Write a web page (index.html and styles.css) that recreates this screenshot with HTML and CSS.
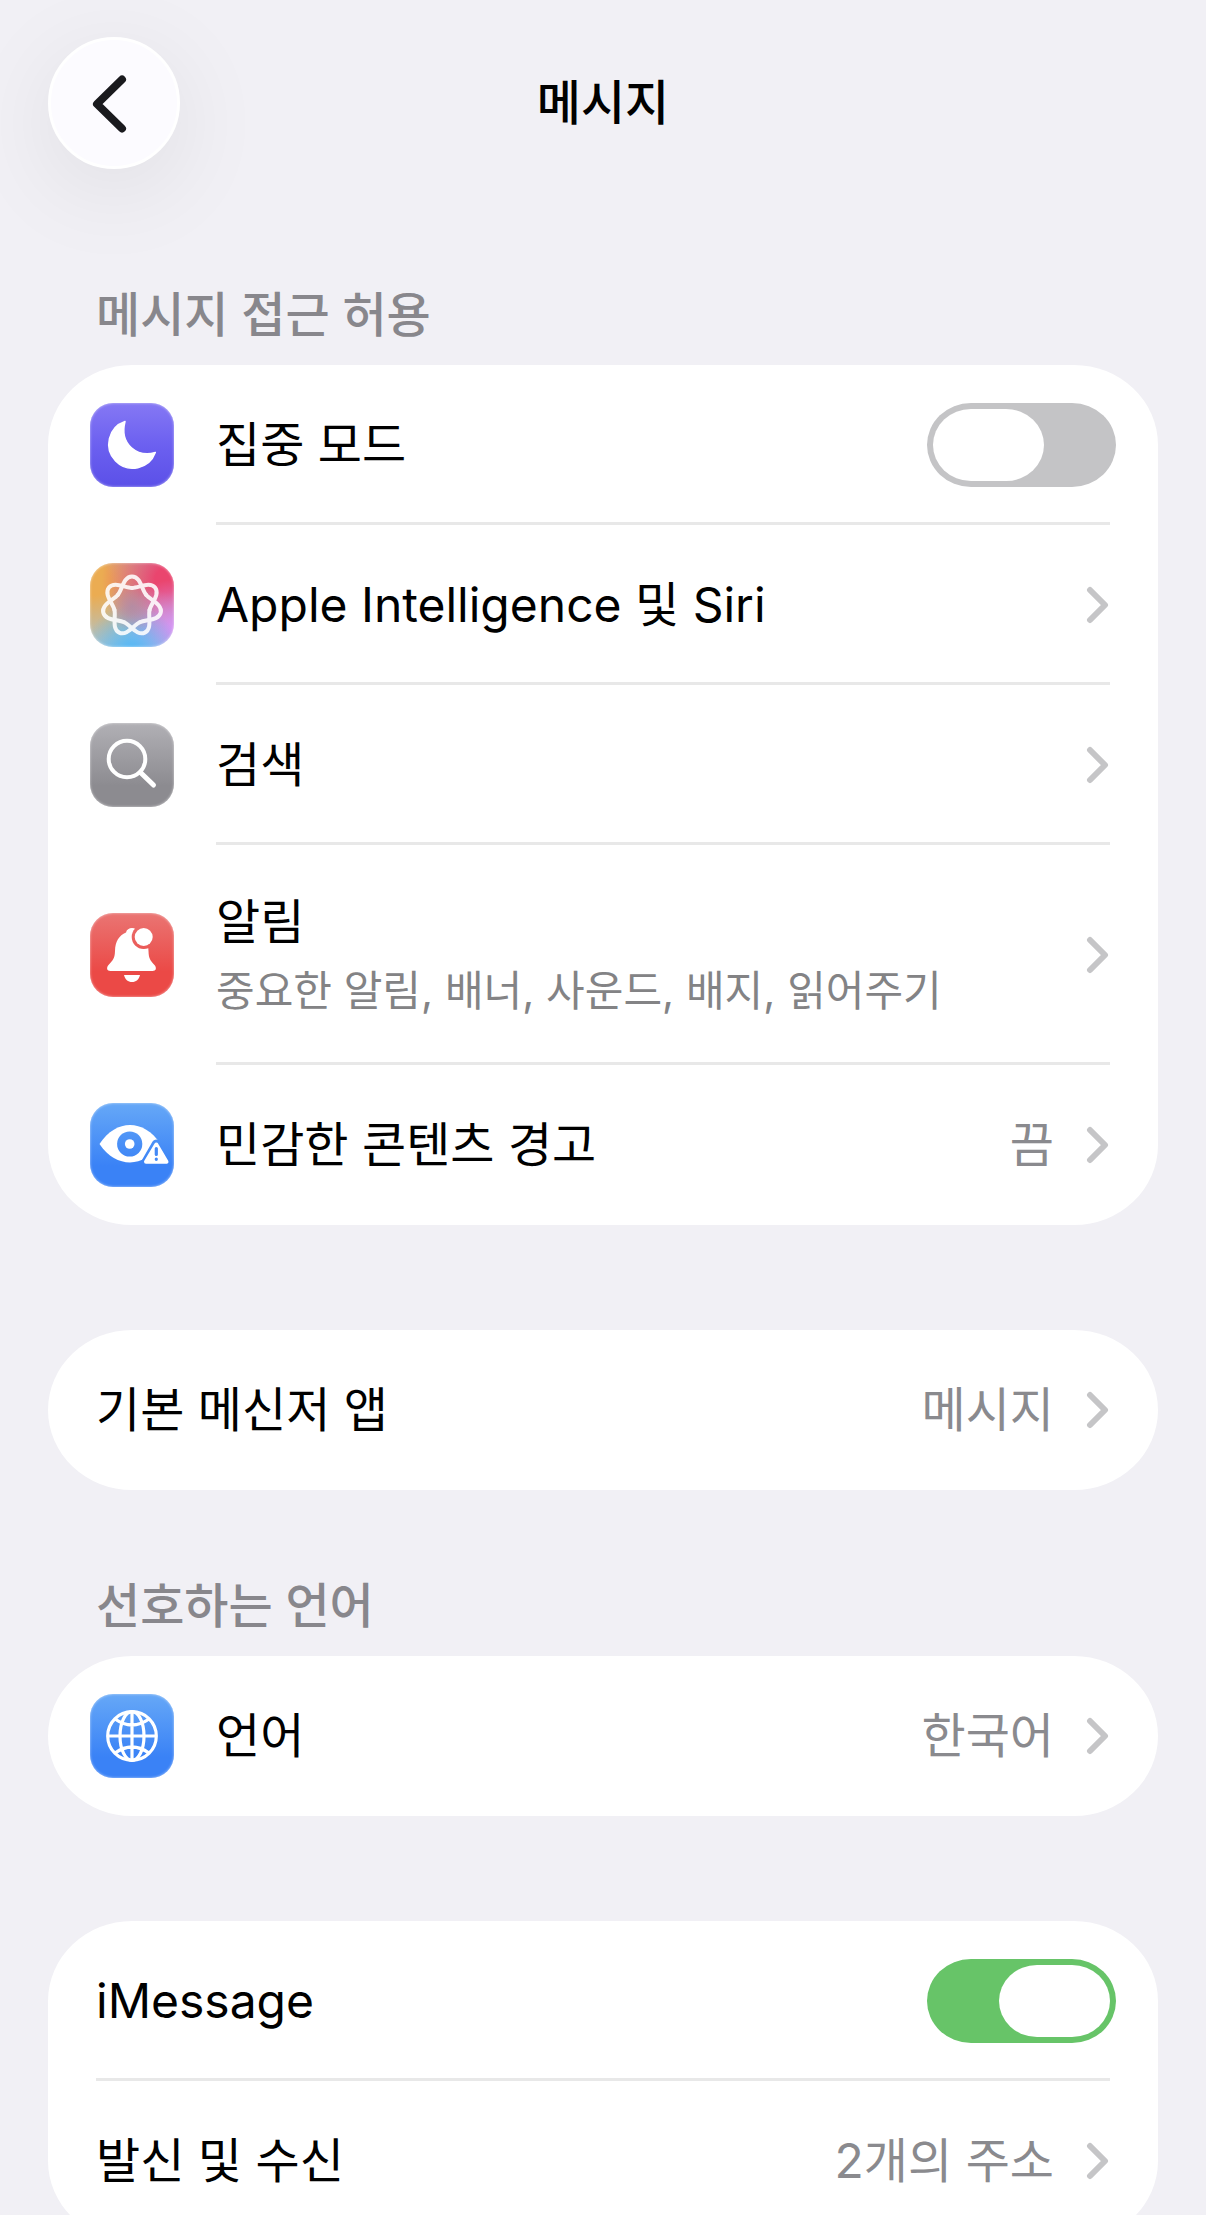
FILE: index.html
```html
<!DOCTYPE html>
<html lang="ko">
<head>
    <meta charset="UTF-8">
    <meta name="viewport" content="width=device-width, initial-scale=1.0">
    <title>메시지</title>
    <link rel="stylesheet" href="styles.css">
</head>
<body>
    <!-- 공용 심볼 -->
    <svg class="symbols" aria-hidden="true">
        <symbol id="chevron" viewBox="0 0 24 40">
            <path d="M4 5l15 15L4 35" fill="none" stroke="currentColor" stroke-width="6" stroke-linecap="round" stroke-linejoin="round"/>
        </symbol>
    </svg>

    <div id="app">
        <header class="header">
            <button class="back" type="button" aria-label="뒤로">
                <svg viewBox="0 0 132 132">
                    <path d="M74 42.500L49 67L74 91.500" fill="none" stroke="#1a1a1e" stroke-width="8" stroke-linecap="round" stroke-linejoin="round"/>
                </svg>
            </button>
            <h1 class="title">메시지</h1>
        </header>

        <main class="main">
            <section class="section first">
                <h2 class="section-title">메시지 접근 허용</h2>
                <div class="card">
                    <div class="row">
                        <span class="icon icon-focus">
                            <svg viewBox="0 0 84 84">
                                <path d="M35 18.500A24 24 0 1 0 65.300 49.500C48 54.500 29 42 35 18.500Z" fill="#fff" stroke="#fff" stroke-width="1.500" stroke-linejoin="round"/>
                            </svg>
                        </span>
                        <div class="row-body">
                            <label class="label" for="focus">집중 모드</label>
                            <input class="switch" type="checkbox" id="focus">
                        </div>
                    </div>
                    <a class="row" href="#siri">
                        <span class="icon icon-siri">
                            <svg viewBox="0 0 84 84">
                                <defs>
                                    <path id="lobe" d="M-14.070 -11.220C-9.700 -16.700 -8.500 -29.500 0 -29.500S9.700 -16.700 14.070 -11.220"/>
                                </defs>
                                <g transform="translate(42 43)" fill="none" stroke="#fff" stroke-width="4" stroke-linecap="round" opacity="0.880">
                                    <use href="#lobe"/>
                                    <use href="#lobe" transform="rotate(51.430)"/>
                                    <use href="#lobe" transform="rotate(102.860)"/>
                                    <use href="#lobe" transform="rotate(154.290)"/>
                                    <use href="#lobe" transform="rotate(205.710)"/>
                                    <use href="#lobe" transform="rotate(257.140)"/>
                                    <use href="#lobe" transform="rotate(308.570)"/>
                                </g>
                            </svg>
                        </span>
                        <div class="row-body">
                            <span class="label">Apple Intelligence 및 Siri</span>
                            <svg class="chevron"><use href="#chevron"/></svg>
                        </div>
                    </a>
                    <a class="row" href="#search">
                        <span class="icon icon-search">
                            <svg viewBox="0 0 84 84" fill="none" stroke="#fff" stroke-linecap="round">
                                <circle cx="37" cy="36" r="18.300" stroke-width="4"/>
                                <path d="M50.500 49.500L63.500 62" stroke-width="5"/>
                            </svg>
                        </span>
                        <div class="row-body">
                            <span class="label">검색</span>
                            <svg class="chevron"><use href="#chevron"/></svg>
                        </div>
                    </a>
                    <a class="row row-tall" href="#notifications">
                        <span class="icon icon-bell">
                            <svg viewBox="0 0 84 84">
                                <mask id="bell-cut">
                                    <rect width="84" height="84" fill="#fff"/>
                                    <circle cx="53.700" cy="24" r="12" fill="#000"/>
                                </mask>
                                <g fill="#fff">
                                    <path mask="url(#bell-cut)" d="M36 19.500C37 13.500 47 13.500 48 19.500C55 22 58.300 29 58.500 38C58.700 46 60.500 47.500 64.500 52C67 55 66 58 62.500 58H20.500C17 58 16 55 18.500 52C22.500 47.500 24.800 46 25 38C25.200 28.500 29 22.500 36 19.500Z"/>
                                    <circle cx="53.700" cy="24" r="9"/>
                                    <path d="M34 62H50C49 66.500 46 69 42 69S35 66.500 34 62Z"/>
                                </g>
                            </svg>
                        </span>
                        <div class="row-body">
                            <span class="label">알림
                                <small class="detail">중요한 알림, 배너, 사운드, 배지, 읽어주기</small>
                            </span>
                            <svg class="chevron"><use href="#chevron"/></svg>
                        </div>
                    </a>
                    <a class="row" href="#sensitive">
                        <span class="icon icon-blue">
                            <svg viewBox="0 0 84 84">
                                <mask id="eye-cut">
                                    <rect width="84" height="84" fill="#fff"/>
                                    <circle cx="39.700" cy="41" r="12.600" fill="#000"/>
                                    <path d="M66.300 41L76.500 59H56Z" fill="#000" stroke="#000" stroke-width="9" stroke-linejoin="round"/>
                                </mask>
                                <path mask="url(#eye-cut)" d="M9.500 41C18 28 29 22 40 22S62 28 70.500 41C62 53 51 59.400 40 59.400S18 54 9.500 41Z" fill="#fff"/>
                                <circle cx="39.700" cy="41" r="4.800" fill="#fff"/>
                                <path d="M66.300 41.500L76.500 58.700H56Z" fill="#fff" stroke="#fff" stroke-width="4" stroke-linejoin="round"/>
                                <path d="M66.300 45.500V51.500M66.300 56V56.300" stroke="#4389f6" stroke-width="3.200" stroke-linecap="round"/>
                            </svg>
                        </span>
                        <div class="row-body">
                            <span class="label">민감한 콘텐츠 경고</span>
                            <span class="value">끔</span>
                            <svg class="chevron"><use href="#chevron"/></svg>
                        </div>
                    </a>
                </div>
            </section>

            <section class="section">
                <div class="card">
                    <a class="row row-plain" href="#default-app">
                        <div class="row-body">
                            <span class="label">기본 메신저 앱</span>
                            <span class="value">메시지</span>
                            <svg class="chevron"><use href="#chevron"/></svg>
                        </div>
                    </a>
                </div>
            </section>

            <section class="section titled">
                <h2 class="section-title">선호하는 언어</h2>
                <div class="card">
                    <a class="row" href="#language">
                        <span class="icon icon-blue">
                            <svg viewBox="0 0 84 84" fill="none" stroke="#fff" stroke-width="3.200">
                                <circle cx="42" cy="42" r="24.300"/>
                                <ellipse cx="42" cy="42" rx="12" ry="24.300"/>
                                <path d="M42 17.500V66.500M17.500 42H66.500M25 25Q42 37 59 25M25 59Q42 47 59 59"/>
                            </svg>
                        </span>
                        <div class="row-body">
                            <span class="label">언어</span>
                            <span class="value">한국어</span>
                            <svg class="chevron"><use href="#chevron"/></svg>
                        </div>
                    </a>
                </div>
            </section>

            <section class="section">
                <div class="card">
                    <div class="row row-plain">
                        <div class="row-body">
                            <label class="label" for="imessage">iMessage</label>
                            <input class="switch" type="checkbox" id="imessage" checked>
                        </div>
                    </div>
                    <a class="row row-plain" href="#send-receive">
                        <div class="row-body">
                            <span class="label">발신 및 수신</span>
                            <span class="value">2개의 주소</span>
                            <svg class="chevron"><use href="#chevron"/></svg>
                        </div>
                    </a>
                </div>
            </section>
        </main>
    </div>
</body>
</html>
```

FILE: styles.css
```css
* {
    margin: 0;
    padding: 0;
    box-sizing: border-box;
}

html, body {
    height: 100%;
    overflow: hidden;
}

body {
    background: #f1f0f5;
    color: #000;
    font-family: Inter, "Noto Sans CJK KR", sans-serif;
    font-size: 48px;
    line-height: 72px;
}

a {
    color: inherit;
    text-decoration: none;
}

.symbols {
    display: none;
}

#app {
    height: 100vh;
    overflow-y: auto;
    scrollbar-width: none;
    padding: 37px 48px;
}

/* 상단 바 */
.header {
    display: grid;
    grid-template-columns: 132px 1fr 132px;
    align-items: center;
}

.back {
    width: 132px;
    height: 132px;
    border: 3px solid #fff;
    border-radius: 50%;
    background: #fcfbff;
    box-shadow: 0 20px 96px rgba(0, 0, 0, 0.08);
    cursor: pointer;
}

.back svg {
    display: block;
    width: 132px;
    height: 132px;
    margin: -3px;
}

.title {
    font-size: 48px;
    font-weight: 500;
    text-align: center;
}

/* 섹션 */
.section {
    margin-top: 105px;
}

.section.titled {
    margin-top: 80px;
}

.section.first {
    margin-top: 110px;
}

.section-title {
    padding: 0 48px;
    margin-bottom: 14px;
    color: #88878c;
    font-size: 48px;
    font-weight: 500;
}

.card {
    background: #fff;
    border-radius: 84px / 80px;
    overflow: hidden;
}

.row {
    display: flex;
    align-items: center;
    gap: 42px;
    padding: 0 48px 0 42px;
}

.row-plain {
    padding-left: 48px;
}

.row-body {
    flex: 1;
    display: flex;
    align-items: center;
    gap: 32px;
    min-height: 160px;
}

.row-tall .row-body {
    min-height: 220px;
}

.row:not(:last-child) .row-body {
    box-shadow: inset 0 -3px #e8e8e8;
}

.label {
    flex: 1;
}

.detail {
    display: block;
    color: #838385;
    font-size: 42px;
    line-height: 66px;
}

.value {
    color: #8a8a8e;
}

.chevron {
    width: 24px;
    height: 40px;
    color: #c5c5c7;
}

/* 앱 아이콘 */
.icon {
    width: 84px;
    height: 84px;
    border-radius: 23px;
    box-shadow: inset 0 0 2px 1px rgba(255, 255, 255, 0.3);
}

.icon svg {
    display: block;
    width: 100%;
    height: 100%;
}

.icon-focus {
    background: linear-gradient(#8578f4, #6c60f0 50%, #5b50e8);
}

.icon-siri {
    background:
        radial-gradient(circle at 50% 52%, rgba(178, 140, 165, 0.9), transparent 40%),
        radial-gradient(circle at 50% 105%, #50b6f6, transparent 48%),
        radial-gradient(circle at 100% 78%, #d694f5, transparent 46%),
        radial-gradient(circle at 92% 20%, #ea456e 12%, transparent 64%),
        radial-gradient(circle at 5% 20%, #ebac52 15%, transparent 70%),
        #a5c8de;
}

.icon-search {
    background: linear-gradient(#b1b0b5, #8c8b90 75%);
}

.icon-bell {
    background: linear-gradient(#ea7573, #eb4946 70%);
}

.icon-blue {
    background: linear-gradient(#66a8f7, #3a82f6 75%);
}

/* 스위치 */
.switch {
    appearance: none;
    display: flex;
    width: 189px;
    height: 84px;
    padding: 6px;
    margin-right: -6px;
    border-radius: 44px / 42px;
    background: #c4c4c6;
    cursor: pointer;
}

.switch::before {
    content: "";
    width: 111px;
    height: 72px;
    border-radius: 38px / 36px;
    background: #fff;
}

.switch:checked {
    justify-content: flex-end;
    background: #67c468;
}
```
